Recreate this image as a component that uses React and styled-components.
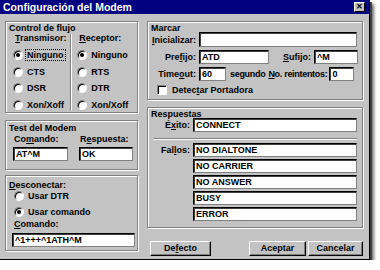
import styled, { createGlobalStyle } from "styled-components";

const GlobalStyle = createGlobalStyle`
  html, body {
    margin: 0;
    padding: 0;
    background: #ffffff;
  }
  body {
    font-family: "Liberation Sans", Arial, sans-serif;
    font-size: 9px;
    font-weight: bold;
    color: #000;
  }
`;

export default function App() {
  return (
    <>
      <GlobalStyle />
      <Window>
        <TitleBar>
          <Title>Configuración del Modem</Title>
          <CloseButton>✕</CloseButton>
        </TitleBar>
        <Content>
          <Column>
            <Group $h={92} $pt={1}>
              <GroupTitle>Control de flujo</GroupTitle>
              <FlowColumns>
                <FlowCol $pl={4}>
                  <SubHead><u>T</u>ransmisor:</SubHead>
                  <RadioRow><Radio $on /><Focus>Ninguno</Focus></RadioRow>
                  <RadioRow><Radio /><span>CTS</span></RadioRow>
                  <RadioRow><Radio /><span>DSR</span></RadioRow>
                  <RadioRow><Radio /><span>Xon/Xoff</span></RadioRow>
                </FlowCol>
                <VDivider />
                <FlowCol $pl={5.5}>
                  <SubHead><u>R</u>eceptor:</SubHead>
                  <RadioRow><Radio $on /><span>Ninguno</span></RadioRow>
                  <RadioRow><Radio /><span>RTS</span></RadioRow>
                  <RadioRow><Radio /><span>DTR</span></RadioRow>
                  <RadioRow><Radio /><span>Xon/Xoff</span></RadioRow>
                </FlowCol>
              </FlowColumns>
            </Group>

            <Group $h={50} $mt={7} $pt={2}>
              <GroupTitle>Test del Modem</GroupTitle>
              <TestGrid>
                <TestLabel>Co<u>m</u>ando:</TestLabel>
                <TestLabel>R<u>e</u>spuesta:</TestLabel>
                <Field>AT^M</Field>
                <Field>OK</Field>
              </TestGrid>
            </Group>

            <Group $h={76} $mt={5} $pt={4}>
              <GroupTitle><u>D</u>esconectar:</GroupTitle>
              <DiscRadios>
                <RadioRow $h={14}><Radio /><span>Usar DTR</span></RadioRow>
                <RadioRow $h={14}><Radio $on /><span>Usar comando</span></RadioRow>
              </DiscRadios>
              <DiscLabel><u>C</u>omando:</DiscLabel>
              <DiscField>^1+++^1ATH^M</DiscField>
            </Group>
          </Column>

          <Column>
            <Group $h={79} $pt={1}>
              <GroupTitle>Marcar</GroupTitle>
              <DialRows>
                <DialRow>
                  <RightLabel $w={48}><u>I</u>nicializar:</RightLabel>
                  <Field $w={158} $h={15}></Field>
                </DialRow>
                <DialRow>
                  <RightLabel $w={48}>Pre<u>f</u>ijo:</RightLabel>
                  <Field $w={70}>ATD</Field>
                  <InlineLabel $ml={14} $mr={3}><u>S</u>ufijo:</InlineLabel>
                  <Field $w={44}>^M</Field>
                </DialRow>
                <DialRow>
                  <RightLabel $w={48}>Time<u>o</u>ut:</RightLabel>
                  <Field $w={27}>60</Field>
                  <InlineLabel $ml={4} $mr={3} $tight>segundo</InlineLabel>
                  <InlineLabel $mr={2} $tight><u>N</u>o. reintentos:</InlineLabel>
                  <Field $w={25}>0</Field>
                </DialRow>
              </DialRows>
              <CheckRow>
                <CheckBox />
                <span>Detec<u>t</u>ar Portadora</span>
              </CheckRow>
            </Group>

            <Group $h={121} $mt={7} $pt={1}>
              <GroupTitle>Respuestas</GroupTitle>
              <RespRow>
                <RightLabel $w={42}>É<u>x</u>ito:</RightLabel>
                <Field $w={164}>CONNECT</Field>
              </RespRow>
              <HDivider />
              <FailGrid>
                <RightLabel $w={42}>Fal<u>l</u>os:</RightLabel>
                <FailList>
                  {["NO DIALTONE", "NO CARRIER", "NO ANSWER", "BUSY", "ERROR"].map((t) => (
                    <Field key={t} $w={164}>{t}</Field>
                  ))}
                </FailList>
              </FailGrid>
            </Group>

            <ButtonRow>
              <Button $w={61}>De<u>f</u>ecto</Button>
              <Spacer />
              <Button $w={57}>Aceptar</Button>
              <Button $w={55}>Cancelar</Button>
            </ButtonRow>
          </Column>
        </Content>
      </Window>
    </>
  );
}

const Window = styled.div`
  width: 370px;
  height: 260px;
  background: #c3c3c3;
  box-sizing: border-box;
  border-right: 1px solid #000;
  border-bottom: 1px solid #000;
  box-shadow: 2px 2px 0 #404040, 4px 4px 3px #707070;
  display: flex;
  flex-direction: column;
`;

const TitleBar = styled.div`
  height: 14px;
  background: #000080;
  display: flex;
  align-items: center;
  justify-content: space-between;
  padding: 0 4px 0 3px;
  box-sizing: border-box;
`;

const Title = styled.div`
  color: #fff;
  font-size: 10.5px;
  font-weight: bold;
  line-height: 14px;
`;

const CloseButton = styled.div`
  width: 11px;
  height: 10px;
  box-sizing: border-box;
  background: #c3c3c3;
  border: 1px solid;
  border-color: #fff #000 #000 #fff;
  font-size: 8px;
  line-height: 8px;
  text-align: center;
  color: #000;
`;

const Content = styled.div`
  display: grid;
  grid-template-columns: 133px 216px;
  column-gap: 9px;
  padding: 7px 0 0 5px;
`;

const Column = styled.div`
  display: flex;
  flex-direction: column;
`;

const Group = styled.div`
  height: ${(p) => p.$h}px;
  margin-top: ${(p) => p.$mt || 0}px;
  box-sizing: border-box;
  border: 1px solid #808080;
  box-shadow: inset 1px 1px 0 #fff, 1px 1px 0 #fff;
  padding: ${(p) => p.$pt || 0}px 3px 0 3px;
  display: flex;
  flex-direction: column;
`;

const GroupTitle = styled.div`
  line-height: 10px;
  white-space: nowrap;
`;

const FlowColumns = styled.div`
  display: flex;
  flex: 1;
`;

const FlowCol = styled.div`
  flex: 1;
  display: flex;
  flex-direction: column;
  padding-left: ${(p) => p.$pl}px;
`;

const VDivider = styled.div`
  width: 1px;
  background: #808080;
  border-right: 1px solid #fff;
  margin: 1px 0 2px;
`;

const SubHead = styled.div`
  line-height: 10px;
  margin: 0 0 4px 2px;
`;

const RadioRow = styled.div`
  display: flex;
  align-items: center;
  height: ${(p) => p.$h || 16.5}px;
  gap: 4px;
  white-space: nowrap;
`;

const Radio = styled.span`
  position: relative;
  width: 10px;
  height: 10px;
  box-sizing: border-box;
  border-radius: 50%;
  background: #fff;
  border: 1px solid;
  border-color: #808080 #fff #fff #808080;
  box-shadow: inset 1px 1px 0 #000;
  flex-shrink: 0;
  &::after {
    content: "";
    display: ${(p) => (p.$on ? "block" : "none")};
    position: absolute;
    left: 2px;
    top: 2px;
    width: 4px;
    height: 4px;
    border-radius: 50%;
    background: #000;
  }
`;

const Focus = styled.span`
  outline: 1px dotted #000;
  padding: 0 1px;
  margin-left: -1px;
  line-height: 10px;
`;

const TestGrid = styled.div`
  display: grid;
  grid-template-columns: 55px 54px;
  column-gap: 11px;
  row-gap: 3px;
  padding-left: 4px;
  margin-top: 1px;
`;

const TestLabel = styled.div`
  line-height: 10px;
  padding-left: 1px;
`;

const Field = styled.div`
  width: ${(p) => (p.$w ? `${p.$w}px` : "auto")};
  height: ${(p) => p.$h || 14}px;
  flex-shrink: 0;
  box-sizing: border-box;
  background: #fff;
  border: 1px solid;
  border-color: #000 #808080 #808080 #000;
  box-shadow: inset 1px 1px 0 #404040;
  padding: 0 2px;
  line-height: 12px;
  white-space: nowrap;
  overflow: hidden;
`;

const DiscRadios = styled.div`
  display: flex;
  flex-direction: column;
  gap: 2px;
  padding-left: 5px;
  margin-top: -1px;
`;

const DiscLabel = styled.div`
  padding-left: 5px;
  line-height: 10px;
  margin-bottom: 4px;
`;

const DiscField = styled(Field)`
  width: 123px;
  margin-left: 3px;
`;

const DialRows = styled.div`
  display: flex;
  flex-direction: column;
  gap: 3px;
  margin-top: -1px;
`;

const DialRow = styled.div`
  display: flex;
  align-items: center;
  white-space: nowrap;
`;

const RightLabel = styled.div`
  width: ${(p) => p.$w}px;
  flex-shrink: 0;
  box-sizing: border-box;
  text-align: right;
  padding-right: 3px;
  line-height: 14px;
  white-space: nowrap;
`;

const InlineLabel = styled.div`
  margin-left: ${(p) => p.$ml || 0}px;
  margin-right: ${(p) => p.$mr || 0}px;
  letter-spacing: ${(p) => (p.$tight ? "-0.3px" : "normal")};
  white-space: nowrap;
  flex-shrink: 0;
`;

const CheckRow = styled.div`
  display: flex;
  align-items: center;
  gap: 5px;
  height: 10px;
  margin: 4px 0 0 6px;
  white-space: nowrap;
`;

const CheckBox = styled.span`
  width: 10px;
  height: 10px;
  flex-shrink: 0;
  box-sizing: border-box;
  background: #fff;
  border: 1px solid;
  border-color: #808080 #fff #fff #808080;
  box-shadow: inset 1px 1px 0 #000;
`;

const RespRow = styled.div`
  display: flex;
  align-items: center;
  margin-top: -1px;
`;

const HDivider = styled.div`
  height: 1px;
  background: #808080;
  border-bottom: 1px solid #fff;
  margin: 6px 2px 3px 2px;
`;

const FailGrid = styled.div`
  display: flex;
  align-items: flex-start;
`;

const FailList = styled.div`
  display: flex;
  flex-direction: column;
  gap: 2px;
`;

const ButtonRow = styled.div`
  display: flex;
  gap: 2px;
  margin-top: 13px;
  padding-left: 3px;
`;

const Spacer = styled.div`
  flex: 1;
`;

const Button = styled.div`
  width: ${(p) => p.$w}px;
  height: 15px;
  box-sizing: border-box;
  background: #c3c3c3;
  border: 1px solid;
  border-color: #fff #000 #000 #fff;
  box-shadow: inset -1px -1px 0 #808080;
  text-align: center;
  line-height: 13px;
`;
